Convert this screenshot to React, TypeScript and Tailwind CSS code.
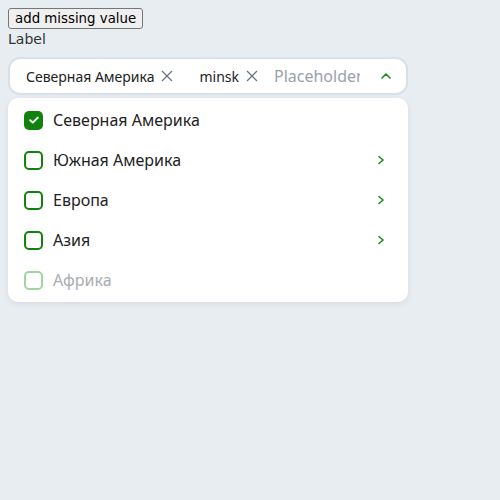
import React from "react";

const GREEN = "#1a8a1a";

function Check({ state }: { state: "checked" | "empty" | "disabled" }) {
  if (state === "checked") {
    return (
      <span className="w-[19px] h-[19px] rounded-[5px] bg-[#12820f] flex items-center justify-center shrink-0">
        <svg width="12" height="12" viewBox="0 0 12 12" fill="none">
          <path d="M2.2 6.2 L4.8 8.6 L9.8 3.6" stroke="white" strokeWidth="2" strokeLinecap="round" strokeLinejoin="round" />
        </svg>
      </span>
    );
  }
  return (
    <span
      className={
        "w-[19px] h-[19px] rounded-[5px] border-2 shrink-0 " +
        (state === "disabled" ? "border-[#a3d3a1]" : "border-[#12820f]")
      }
    />
  );
}

function Chevron() {
  return (
    <svg width="10" height="12" viewBox="0 0 10 12" fill="none">
      <path d="M3 2.5 L7 6 L3 9.5" stroke={GREEN} strokeWidth="1.6" strokeLinecap="round" strokeLinejoin="round" />
    </svg>
  );
}

function XIcon() {
  return (
    <svg width="12" height="12" viewBox="0 0 12 12" fill="none">
      <path d="M1 1 L11 11 M11 1 L1 11" stroke="#6b7280" strokeWidth="1.3" />
    </svg>
  );
}

export default function App() {
  const items: { label: string; state: "checked" | "empty" | "disabled"; arrow: boolean }[] = [
    { label: "Северная Америка", state: "checked", arrow: false },
    { label: "Южная Америка", state: "empty", arrow: true },
    { label: "Европа", state: "empty", arrow: true },
    { label: "Азия", state: "empty", arrow: true },
    { label: "Африка", state: "disabled", arrow: false },
  ];
  return (
    <div className="w-[500px] h-[500px] bg-[#e8edf2] p-2 font-['Noto_Sans',sans-serif] text-[#222]">
      <button className="border border-[#767676] rounded-[3px] bg-[#efefef] px-[6px] h-[21px] text-[13.33px] leading-[18px] text-black block font-['DejaVu_Sans',sans-serif]">
        add missing value
      </button>
      <div className="text-[14px] leading-[20px] mt-[0px] text-[#333] font-['DejaVu_Sans',sans-serif]">Label</div>
      <div className="mt-[8px] w-[400px] h-[38px] bg-white border-2 border-[#d8e0e8] rounded-[12px] flex items-center pl-[16px] pr-[14px] overflow-hidden">
        <span className="text-[14px] text-[#222] whitespace-nowrap">Северная Америка</span>
        <span className="ml-[7px]"><XIcon /></span>
        <span className="ml-[26px] text-[14px] text-[#222]">minsk</span>
        <span className="ml-[7px]"><XIcon /></span>
        <span className="ml-[16px] text-[16px] text-[#9aa1a8] w-[86px] overflow-hidden whitespace-nowrap">Placeholder</span>
        <span className="ml-auto">
          <svg width="12" height="10" viewBox="0 0 12 10" fill="none">
            <path d="M2 7 L6 3 L10 7" stroke={GREEN} strokeWidth="1.6" strokeLinecap="round" strokeLinejoin="round" />
          </svg>
        </span>
      </div>
      <div className="mt-[3px] w-[400px] bg-white rounded-[10px] shadow-[0_2px_6px_rgba(0,0,0,0.08)] pt-[2px] pb-[2px]">
        {items.map((it) => (
          <div key={it.label} className="h-[40px] flex items-center pl-[16px] pr-[22px]">
            <Check state={it.state} />
            <span
              className={
                "ml-[10px] text-[16px] " + (it.state === "disabled" ? "text-[#a8acb0]" : "text-[#222]")
              }
            >
              {it.label}
            </span>
            {it.arrow && (
              <span className="ml-auto">
                <Chevron />
              </span>
            )}
          </div>
        ))}
      </div>
    </div>
  );
}
